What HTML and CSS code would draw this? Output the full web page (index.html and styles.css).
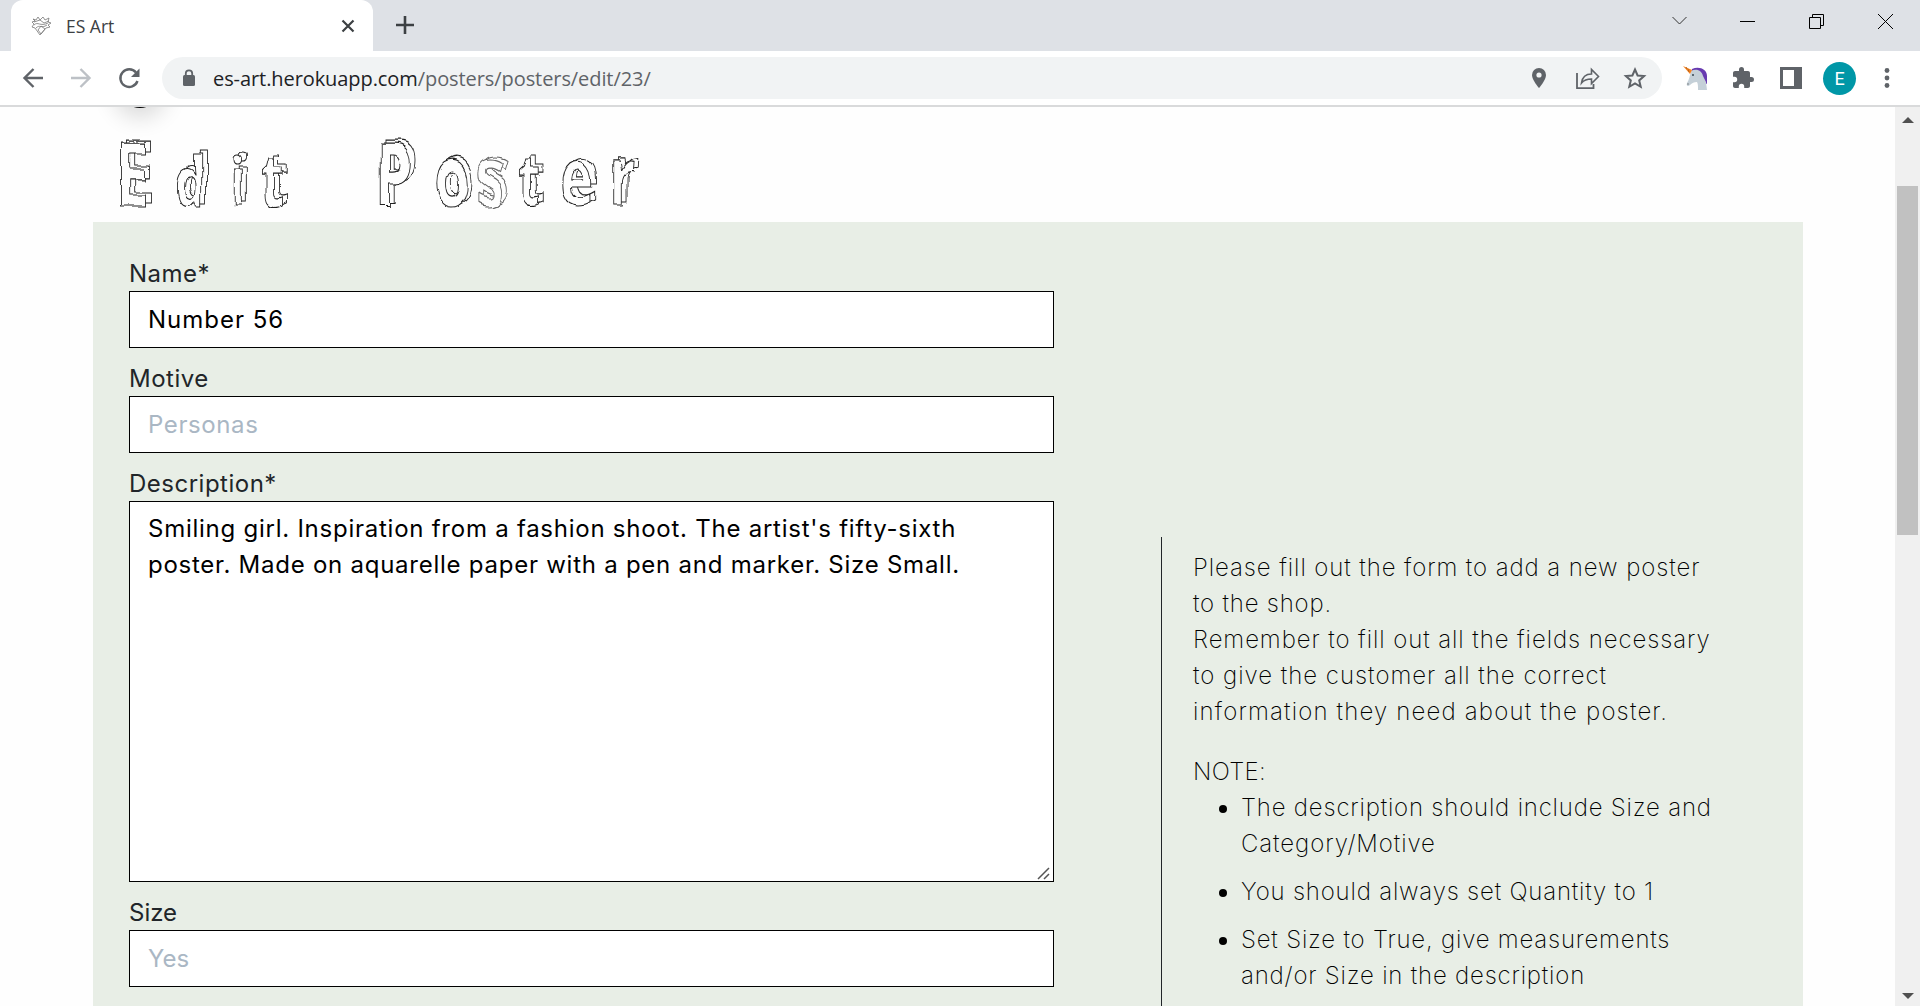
FILE: index.html
```html
<!DOCTYPE html>
<html lang="en">
<head>
<meta charset="utf-8">
<title>ES Art</title>
<link rel="stylesheet" href="styles.css">
</head>
<body>
<div class="browser">
  <div class="tabstrip">
    <div class="tab">
      <svg class="favicon" viewBox="0 0 22 22" width="22" height="22" fill="none" stroke="#777" stroke-width=".8"><path d="M2 4l3 1 2-3 2 3 3-3 2 3 4-2-1 4 3 1-3 2 2 2-4 1-6 7-5-7-3-1 2-3-2-2 3-1zM3 7l6-2 4 3 5-2M3 10c4-4 6 2 14-2M5 13c4-4 5 1 11-3M7 15l3-4 4 3-4 5z"/></svg>
      <span class="tab-title">ES Art</span>
      <svg class="tab-close" viewBox="0 0 14 14" width="14" height="14" stroke="#3c4043" stroke-width="2.2"><path d="M1.5 1.5l11 11m0-11l-11 11"/></svg>
    </div>
    <svg class="newtab" viewBox="0 0 18 18" width="18" height="18" stroke="#3c4043" stroke-width="2.6"><path d="M9 0v18M0 9h18"/></svg>
    <svg class="win" viewBox="0 0 228 18" width="228" height="18" fill="none" stroke="#000" stroke-width="1"><path d="M5.500 5l7 7 7-7" stroke="#333"/><path d="M73 9.500h15M142.500 5.500h11v11h-11zM145.500 5.500v-3h11v11h-3M211 2l15 15M226 2l-15 15"/></svg>
  </div>
  <div class="toolbar">
    <svg class="nav" viewBox="0 0 140 24" width="140" height="24" fill="none" stroke="#5f6368" stroke-width="2.4"><path d="M24 12H6M14.500 3L5.500 12l9 9"/><path d="M52 12h18M61.500 3l9 9-9 9" stroke="#bdc1c6"/><path d="M117 6.500A8.800 8.800 0 1 0 118.500 15"/><path d="M120.500 2.500v8.500h-8.500z" fill="#5f6368" stroke="none"/></svg>
    <div class="omnibox">
      <svg viewBox="0 0 14 18" width="14" height="18"><rect x="1" y="6" width="12" height="11" rx="1.500" fill="#5f6368"/><path d="M3.800 7V4.500a3.200 3.200 0 0 1 6.400 0V7" fill="none" stroke="#5f6368" stroke-width="1.800"/></svg>
      <span class="url">es-art.herokuapp.com<span class="path">/posters/posters/edit/23/</span></span>
      <svg class="omni-icons" viewBox="0 0 120 24" width="120" height="24" fill="none" stroke="#5f6368" stroke-width="1.800"><path d="M12 2a7 7 0 0 0-7 7c0 5 7 13 7 13s7-8 7-13a7 7 0 0 0-7-7z" fill="#5f6368" stroke="none"/><circle cx="12" cy="9" r="2.600" fill="#f1f3f4" stroke="none"/><path d="M50 7v15.200h16.500V18"/><path d="M54.500 17c.8-6 4-9 10-9V3.500l7 7-7 7V13c-4.500 0-7.500 1-10 4z" stroke-width="1.600"/><path d="M108 3.500l2.600 6 6.500.6-4.900 4.300 1.500 6.400-5.700-3.400-5.700 3.400 1.500-6.400-4.900-4.300 6.500-.6z" stroke-width="2"/></svg>
    </div>
    <svg class="unicorn" viewBox="0 0 24 24" width="24" height="24"><path d="M9 3c7-3 15 0 15 7v8l-4-2-4-9-8 1z" fill="#673ab0"/><path d="M8 5c6-3 11 0 12 5l3 6 1 8h-9c0-4 0-6-1-8-3 0-5 1-7 3-2 2-4 1-3-2 2-3 3-8 4-12z" fill="#c5d0d8"/><path d="M0 0l9 4-2 4z" fill="#f58220"/><path d="M3 1l1 2M5 3l1 3" stroke="#b5651d"/><circle cx="10" cy="9" r="1" fill="#37474f"/><circle cx="5" cy="18" r=".7" fill="#666"/></svg>
    <svg class="puzzle" viewBox="0 0 24 24" width="24" height="24" fill="#5f6368"><path d="M20.500 11H19V7c0-1.100-.9-2-2-2h-4V3.500a2.500 2.500 0 0 0-5 0V5H4c-1.100 0-2 .9-2 2v3.800h1.500a2.700 2.700 0 0 1 0 5.400H2V20c0 1.100.9 2 2 2h3.800v-1.500a2.700 2.700 0 0 1 5.400 0V22H17c1.100 0 2-.9 2-2v-4h1.500a2.500 2.500 0 0 0 0-5z"/></svg>
    <svg class="panel" viewBox="0 0 22 22" width="22" height="22"><path d="M0 0h22v22H0zM3 3v16h11V3z" fill="#5f6368" fill-rule="evenodd"/></svg>
    <span class="avatar">E</span>
    <svg class="menu" viewBox="0 0 6 20" width="6" height="20" fill="#5f6368"><circle cx="3" cy="2.500" r="2.400"/><circle cx="3" cy="10" r="2.400"/><circle cx="3" cy="17.500" r="2.400"/></svg>
  </div>
  <div class="viewport">
    <main class="page">
      <svg class="defs" width="0" height="0"><filter id="sketch" x="-5%" y="-15%" width="110%" height="130%"><feTurbulence type="fractalNoise" baseFrequency=".035" numOctaves="2" seed="4"/><feDisplacementMap in="SourceGraphic" scale="9" xChannelSelector="R" yChannelSelector="G"/></filter></svg>
      <div class="round-shadow"></div>
      <h1 class="title"><span class="g cap" data-c="E">E</span><span class="g mid" data-c="d">d</span><span class="g mid" data-c="i">i</span><span class="g tee" data-c="t">t </span><span class="g cap" data-c="P">P</span><span class="g" data-c="o">o</span><span class="g ess" data-c="s">s</span><span class="g tee" data-c="t">t</span><span class="g" data-c="e">e</span><span class="g" data-c="r">r</span></h1>
      <section class="card">
        <form class="form">
          <label class="ls5" for="name">Name*</label>
          <input class="name-input" id="name" value="Number 56">
          <label class="ls5" for="motive">Motive</label>
          <input id="motive" placeholder="Personas">
          <label class="ls5" for="desc">Description*</label>
          <div class="area">
            <textarea id="desc">Smiling girl. Inspiration from a fashion shoot. The artist's fifty-sixth
poster. Made on aquarelle paper with a pen and marker. Size Small.</textarea>
            <svg class="grip" viewBox="0 0 14 14" width="14" height="14" stroke="#555" stroke-width="1.500"><path d="M1 13L12 2M7 13l5-5"/></svg>
          </div>
          <label for="size">Size</label>
          <input class="size-input" id="size" placeholder="Yes">
        </form>
        <aside class="notes">
          <p><span class="ls9">Please fill out the form to add a new poster</span><br><span class="ls8">to the shop.</span><br><span class="ls9">Remember to fill out all the fields necessary</span><br><span class="ls10">to give the customer all the correct</span><br><span class="ls12">information they need about the poster.</span></p>
          <div class="ls3">NOTE:</div>
          <ul>
            <li><span class="ls8">The description should include Size and</span><br><span class="ls9">Category/Motive</span></li>
            <li><span class="ls8">You should always set Quantity to 1</span></li>
            <li><span class="ls8">Set Size to True, give measurements</span><br><span class="ls8">and/or Size in the description</span></li>
          </ul>
        </aside>
      </section>
    </main>
    <div class="scrollbar"><i class="up"></i><i class="thumb"></i><i class="down"></i></div>
  </div>
</div>
</body>
</html>
```
FILE: styles.css
```css
* { box-sizing: border-box; }
body { margin: 0; overflow: hidden; }
svg { display: block; flex: none; }
.browser { width: 1920px; height: 1006px; display: flex; flex-direction: column; background: #fff; overflow: hidden; }
.tabstrip { height: 51px; flex: none; display: flex; align-items: flex-start; background: #dee1e6; font-family: "Open Sans", sans-serif; }
.tab { width: 362px; height: 51px; margin-left: 11px; padding: 0 18px 0 20px; display: flex; align-items: center; background: #fff; border-radius: 12px 12px 0 0; }
.tab-title { margin-left: 13px; flex: 1; font-size: 17.5px; line-height: 50px; color: #3c4043; }
.newtab { margin: 16px 0 0 23px; }
.win { margin: 12px 25px 0 auto; }
.toolbar { height: 56px; flex: none; display: flex; align-items: center; border-bottom: 2px solid #d9dadb; font-family: "Open Sans", sans-serif; }
.nav { margin-left: 19px; }
.omnibox { width: 1500px; height: 42px; margin-left: 3px; border-radius: 21px; display: flex; align-items: center; padding: 0 15px 0 20px; background: #f1f3f4; }
.url { margin-left: 17px; font-size: 20px; letter-spacing: -.08px; color: #202124; }
.path { color: #5f6368; }
.omni-icons { margin-left: auto; }
.unicorn { margin-left: 21px; }
.puzzle { margin-left: 24px; }
.panel { margin-left: 25px; }
.avatar { width: 33px; height: 33px; margin-left: 21px; border-radius: 50%; background: #0097a7; color: #fff; font: 18px/33px Roboto, sans-serif; text-align: center; }
.menu { margin-left: 28px; }
.viewport { flex: 1; display: flex; min-height: 0; background: #fefefe; }
.page { flex: 1; overflow: hidden; position: relative; font: 24px/36px Inter, sans-serif; color: #212529; }
.defs { position: absolute; }
.round-shadow { position: absolute; left: 119px; top: -41px; width: 42px; height: 42px; border-radius: 50%; background: #000; box-shadow: 0 4px 22px 6px rgba(0,0,0,.14); }
.title { margin: 0 0 0 115px; height: 115px; width: 800px; display: grid; grid-template-columns: 86px 79px 44px 162px 85px 60px 60px 60px 70px 60px; align-items: last baseline; transform: scaleX(.7); transform-origin: 0 0; padding-top: 0; font: 700 82px/84px "Open Sans", sans-serif; filter: url(#sketch); }
.g { position: relative; z-index: 0; color: #fefefe; -webkit-text-stroke: 1.2px #222; }
.g::before { content: attr(data-c); position: absolute; left: 7px; top: -3px; z-index: -1; color: #fefefe; }
.cap { font-size: 87px; }
.mid { font-size: 68px; }
.tee { font-size: 72px; }
.ess { -webkit-text-stroke-color: #666; }
.card { margin-left: 93px; width: 1710px; height: 900px; padding: 33px 0 0 36px; background: #e8eee6; display: flex; }
.form { width: 925px; display: flex; flex-direction: column; }
.form label { height: 36px; padding-top: 1px; }
.form input, .form textarea { display: block; width: 100%; border: 1px solid #000; border-radius: 0; outline: 0; background: #fff; color: #000; font: 400 24px/36px Inter, sans-serif; letter-spacing: .6px; }
.form input { height: 57px; margin: 0 0 12px; padding: 0 18px 1px; }
.form .name-input { letter-spacing: 1px; }
.form .size-input { letter-spacing: 0; }
.form input::placeholder { color: #aab7c4; }
.area { position: relative; height: 381px; margin-bottom: 12px; }
.form textarea { height: 381px; padding: 9px 18px; resize: none; overflow: hidden; white-space: pre; letter-spacing: .75px; }
.grip { position: absolute; right: 3px; bottom: 2px; }
.notes { margin: 282px 0 0 107px; width: 580px; padding: 13px 0 0 31px; border-left: 1px solid #212529; color: #000; font-weight: 200; }
.notes p { margin: 0 0 24px; }
.notes ul { margin: 0; padding-left: 48px; }
.notes li { margin-bottom: 12px; }
.ls3 { letter-spacing: .33px; }
.ls5 { letter-spacing: .5px; }
.ls8 { letter-spacing: .8px; }
.ls9 { letter-spacing: .91px; }
.ls10 { letter-spacing: .98px; }
.ls12 { letter-spacing: 1.17px; }
.scrollbar { width: 25px; background: #f0f0f0; display: flex; flex-direction: column; align-items: center; }
.up { border: 6px solid transparent; border-top: 0; border-bottom-color: #505050; margin-top: 10px; }
.thumb { width: 21px; height: 349px; margin-top: 63px; background: #c1c1c1; }
.down { border: 6px solid transparent; border-bottom: 0; border-top-color: #505050; margin: auto 0 7px; }
```
